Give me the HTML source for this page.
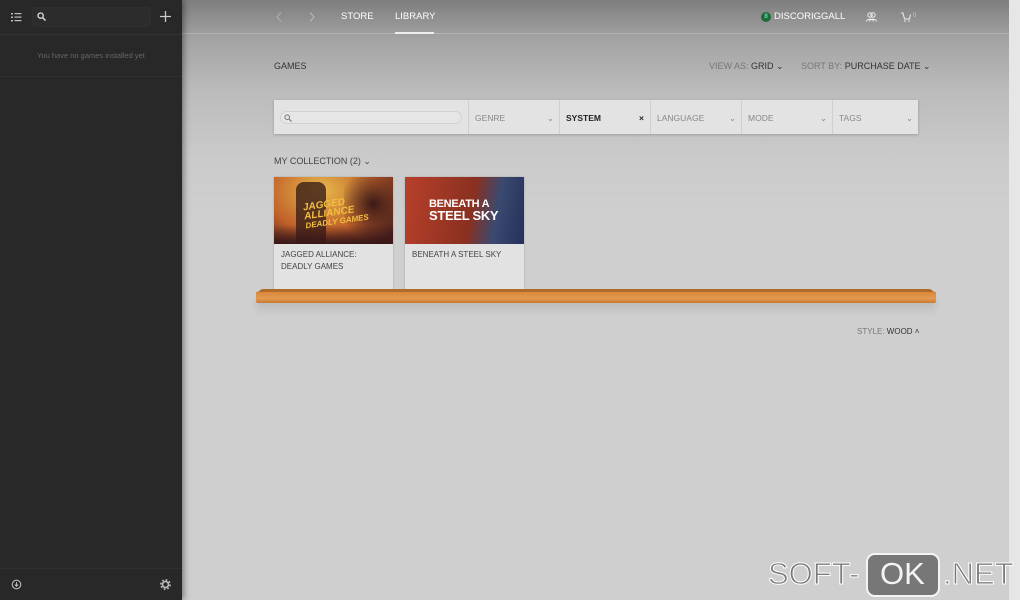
<!DOCTYPE html>
<html><head><meta charset="utf-8"><style>
*{margin:0;padding:0;box-sizing:border-box}
body{width:1020px;height:600px;overflow:hidden;font-family:"Liberation Sans",sans-serif;position:relative;background:#cfcfcf}
.side{position:absolute;left:0;top:0;width:182px;height:600px;background:#282828;box-shadow:2px 0 6px rgba(0,0,0,.4);z-index:3}
.main{position:absolute;left:182px;top:0;width:828px;height:600px;background:linear-gradient(#7e7e7e 0px,#a4a4a4 40px,#bbbbbb 90px,#cbcbcb 160px,#cfcfcf 220px)}
.sb{position:absolute;left:1009px;top:0;width:11px;height:600px;background:#e6e6e6}
.t{position:absolute;white-space:nowrap;font-size:9.5px}
.fbar{position:absolute;left:274px;top:100px;width:644px;height:34px;background:#e3e3e3;box-shadow:0 1px 3px rgba(0,0,0,.2)}
.fc{position:absolute;top:0;height:34px;border-left:1px solid #d0d0d0;font-size:8.5px;color:#888;line-height:36px;padding-left:6px}
.card{position:absolute;top:177px;width:119px;height:114px;background:#e2e2e2;box-shadow:0 0 2px rgba(0,0,0,.2)}
.card .img{height:67px;position:relative;overflow:hidden}
.card .n{font-size:8px;color:#444;padding:5px 7px;line-height:12px}
.wm{position:absolute;top:556px;font-size:31px;color:#7a7a7a;-webkit-text-stroke:1px #fff;font-family:'Liberation Sans',sans-serif;white-space:nowrap;line-height:36px}
</style></head><body>
<div class="main"></div>
<div style="position:absolute;left:182px;top:33px;width:828px;height:1px;background:#b4b4b4"></div>
<div class="side">
 <div style="position:absolute;left:0;top:34px;width:182px;height:1px;background:#333"></div>
 <div style="position:absolute;left:0;top:76px;width:182px;height:1px;background:#303030"></div>
 <div style="position:absolute;left:0;top:568px;width:182px;height:1px;background:#303030"></div>
 <svg style="position:absolute;left:11px;top:12px" width="11" height="10"><g fill="#bbb"><rect x="0" y="1" width="2" height="1.5"/><rect x="0" y="4.5" width="2" height="1.5"/><rect x="0" y="8" width="2" height="1.5"/><rect x="3.5" y="1" width="7" height="1.2"/><rect x="3.5" y="4.5" width="7" height="1.2"/><rect x="3.5" y="8" width="7" height="1.2"/></g></svg>
 <div style="position:absolute;left:32px;top:7px;width:119px;height:20px;background:#2c2c2c;border:1px solid #2f2f2f;border-radius:3px"></div>
 <svg style="position:absolute;left:37px;top:12px" width="9" height="9"><circle cx="3.6" cy="3.6" r="2.6" fill="none" stroke="#ddd" stroke-width="1.3"/><line x1="5.5" y1="5.5" x2="8.5" y2="8.5" stroke="#ddd" stroke-width="1.5"/></svg>
 <svg style="position:absolute;left:160px;top:11px" width="11" height="11"><path d="M5.5 0V11M0 5.5H11" stroke="#ccc" stroke-width="1.3"/></svg>
 <div class="t" style="left:0;width:182px;text-align:center;top:51px;font-size:7.5px;color:#666">You have no games installed yet</div>
 <svg style="position:absolute;left:11px;top:579px" width="11" height="11"><circle cx="5.5" cy="5.5" r="4.3" fill="none" stroke="#bbb" stroke-width="1.1"/><path d="M5.5 3v4M3.8 5.5l1.7 1.8 1.7-1.8" stroke="#bbb" stroke-width="1" fill="none"/></svg>
 <svg style="position:absolute;left:160px;top:579px" width="11" height="11"><circle cx="5.5" cy="5.5" r="3" fill="none" stroke="#bbb" stroke-width="1.6"/><circle cx="5.5" cy="5.5" r="4.6" fill="none" stroke="#bbb" stroke-width="1.6" stroke-dasharray="1.8 1.8"/></svg>
</div>
<div class="sb"></div>
<svg style="position:absolute;left:276px;top:12px" width="6" height="10"><path d="M5 0.5L1 5l4 4.5" fill="none" stroke="#b0b0b0" stroke-width="1"/></svg>
<svg style="position:absolute;left:309px;top:12px" width="6" height="10"><path d="M1 0.5L5 5l-4 4.5" fill="none" stroke="#b8b8b8" stroke-width="1"/></svg>
<div class="t" style="left:341px;top:11px;color:#fff">STORE</div>
<div class="t" style="left:395px;top:11px;color:#fff">LIBRARY</div>
<div style="position:absolute;left:395px;top:32px;width:39px;height:2px;background:#eee"></div>
<div style="position:absolute;left:761px;top:12px;width:10px;height:10px;border-radius:50%;background:#1e6b3a;color:#9fd;font-size:6px;text-align:center;line-height:10px">8</div>
<div class="t" style="left:774px;top:11px;color:#fff">DISCORIGGALL</div>
<svg style="position:absolute;left:866px;top:12px" width="11" height="10"><circle cx="4" cy="3" r="2.2" fill="none" stroke="#eee"/><circle cx="7" cy="3" r="2.2" fill="none" stroke="#eee"/><path d="M0.5 9.5c0-3 7-3 7 0M3.5 9.5c0-3 7-3 7 0" fill="none" stroke="#eee"/></svg>
<svg style="position:absolute;left:901px;top:12px" width="10" height="10"><path d="M0 1h2l1.5 6h5l1-4.5" fill="none" stroke="#eee" stroke-width="1"/><circle cx="4" cy="9" r=".8" fill="#eee"/><circle cx="8" cy="9" r=".8" fill="#eee"/></svg>
<div class="t" style="left:913px;top:13px;font-size:6px;color:#ccc">0</div>
<div class="t" style="left:274px;top:61px;color:#333;font-size:9px">GAMES</div>
<div class="t" style="left:709px;top:61px;color:#777;font-size:9px">VIEW AS: <span style="color:#333">GRID ⌄</span></div>
<div class="t" style="left:801px;top:61px;color:#777;font-size:9px">SORT BY: <span style="color:#333">PURCHASE DATE ⌄</span></div>
<div style="position:absolute;left:274px;top:82px;width:644px;height:1px;background:#b9b9b9"></div>
<div class="fbar">
 <div style="position:absolute;left:6px;top:11px;width:182px;height:13px;border:1px solid #d2d2d2;border-radius:7px;background:#e6e6e6"></div>
 <svg style="position:absolute;left:10px;top:14px" width="8" height="8"><circle cx="3.2" cy="3.2" r="2.3" fill="none" stroke="#777"/><line x1="5" y1="5" x2="7.5" y2="7.5" stroke="#777" stroke-width="1.2"/></svg>
 <div class="fc" style="left:194px;width:91px">GENRE<span style="position:absolute;right:5px">⌄</span></div>
 <div class="fc" style="left:285px;width:91px;color:#222;font-weight:bold">SYSTEM<span style="position:absolute;right:6px">×</span></div>
 <div class="fc" style="left:376px;width:91px">LANGUAGE<span style="position:absolute;right:5px">⌄</span></div>
 <div class="fc" style="left:467px;width:91px">MODE<span style="position:absolute;right:5px">⌄</span></div>
 <div class="fc" style="left:558px;width:86px">TAGS<span style="position:absolute;right:5px">⌄</span></div>
</div>
<div class="t" style="left:274px;top:156px;color:#444;font-size:9px">MY COLLECTION (2) ⌄</div>
<div style="position:absolute;left:256px;top:300px;width:680px;height:14px;background:linear-gradient(rgba(0,0,0,.12),rgba(0,0,0,0));filter:blur(3px)"></div>
<div class="card" style="left:274px"><div class="img" style="background:radial-gradient(ellipse at 40% 20%,#e8b84a,#c0602a 55%,#4a2020 90%)">
 <div style="position:absolute;left:22px;top:5px;width:30px;height:62px;background:#3a1e18;border-radius:8px 8px 0 0;opacity:.8"></div>
 <div style="position:absolute;left:70px;top:0;width:49px;height:67px;background:radial-gradient(circle at 60% 40%,#3a1a18,rgba(60,20,20,0) 70%)"></div>
 <div style="position:absolute;left:0;top:48px;width:119px;height:19px;background:linear-gradient(rgba(60,20,20,0),#3a1818)"></div>
 <div style="position:absolute;left:30px;top:22px;font:bold italic 10px 'Liberation Sans';color:#f2c040;transform:rotate(-8deg);line-height:9px">JAGGED<br>ALLIANCE<br><span style="font-size:8px">DEADLY GAMES</span></div></div>
 <div class="n">JAGGED ALLIANCE: DEADLY GAMES</div></div>
<div class="card" style="left:405px"><div class="img" style="background:linear-gradient(100deg,#b8402a,#8a3020 55%,#3a4a70 75%,#25305a)">
 <div style="position:absolute;left:24px;top:22px;font:bold 11px/11px 'Liberation Sans';color:#fff;letter-spacing:-.3px">BENEATH A<br><span style="font-size:13px">STEEL SKY</span></div></div>
 <div class="n">BENEATH A STEEL SKY</div></div>
<div style="position:absolute;left:256px;top:289px;width:680px;height:4px;background:#b06a2a;clip-path:polygon(6px 0,674px 0,100% 100%,0 100%)"></div>
<div style="position:absolute;left:256px;top:292px;width:680px;height:11px;background:linear-gradient(#d9883c,#e39a50 60%,#c77730);border-radius:0 0 2px 2px"></div>
<div class="t" style="left:857px;top:327px;font-size:8px;color:#777">STYLE: <span style="color:#333">WOOD ˄</span></div>
<div class="wm" style="left:768px">SOFT-</div>
<div style="position:absolute;left:866px;top:553px;width:74px;height:44px;border-radius:9px;background:#777;border:2px solid #f4f4f4"></div>
<div class="wm" style="left:880px;color:#f4f4f4;-webkit-text-stroke:0">OK</div>
<div class="wm" style="left:943px">.NET</div>
</body></html>
